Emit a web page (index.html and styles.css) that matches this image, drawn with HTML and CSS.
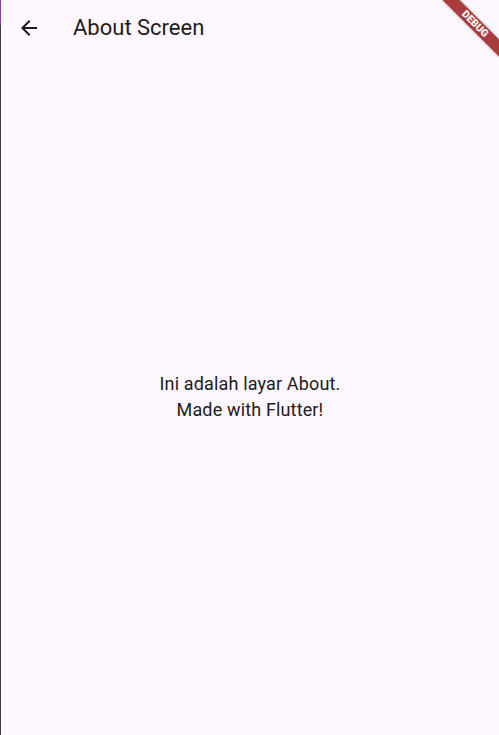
FILE: index.html
```html
<!DOCTYPE html>
<html lang="id">
<head>
<meta charset="utf-8">
<title>About Screen</title>
<link rel="stylesheet" href="styles.css">
</head>
<body>
<div class="frame">
  <div class="edge"></div>
  <div class="app">
    <header class="appbar">
      <button class="back" aria-label="Back">
        <svg width="24" height="24" viewBox="0 0 24 24"><path d="M20 11H7.830l5.59-5.59L12 4l-8 8 8 8 1.41-1.41L7.83 13H20v-2z" fill="#1d1b20"/></svg>
      </button>
      <h1 class="title">About Screen</h1>
    </header>
    <main class="body">
      <p class="msg">Ini adalah layar About.<br>Made with Flutter!</p>
    </main>
  </div>
  <div class="banner"><span>DEBUG</span></div>
</div>
</body>
</html>
```
FILE: styles.css
```css
html, body {
  margin: 0;
  padding: 0;
  height: 100%;
  background: #fef7ff;
}
.frame {
  position: relative;
  display: flex;
  height: 735px;
  overflow: hidden;
  font-family: Roboto, "Liberation Sans", sans-serif;
  color: #1d1b20;
}
.edge {
  width: 1px;
  flex: none;
  background: linear-gradient(to bottom, #8a3cae 0, #8a3cae 25px, #3e3c40 25px, #3e3c40 100%);
}
.app {
  flex: 1;
  display: flex;
  flex-direction: column;
  background: #fef7ff;
}
.appbar {
  height: 56px;
  display: flex;
  align-items: center;
  padding-left: 4px;
}
.back {
  width: 48px;
  height: 48px;
  border: 0;
  padding: 0;
  background: transparent;
  display: flex;
  align-items: center;
  justify-content: center;
}
.title {
  margin: 0 0 0 20px;
  font-size: 22px;
  font-weight: 400;
  line-height: 28px;
}
.body {
  flex: 1;
  display: flex;
  align-items: center;
  justify-content: center;
  padding-top: 2px;
}
.msg {
  margin: 0;
  text-align: center;
  font-size: 18px;
  line-height: 26px;
  letter-spacing: 0.15px;
}
.banner {
  position: absolute;
  left: 435px;
  top: 18px;
  width: 80px;
  height: 12px;
  background: #a93c3c;
  box-shadow: 0 0 3px rgba(0,0,0,0.35);
  transform: rotate(45deg);
  display: flex;
  align-items: center;
  justify-content: center;
}
.banner span {
  color: #fff;
  font-size: 10.2px;
  font-weight: 900;
  line-height: 1;
}
```
